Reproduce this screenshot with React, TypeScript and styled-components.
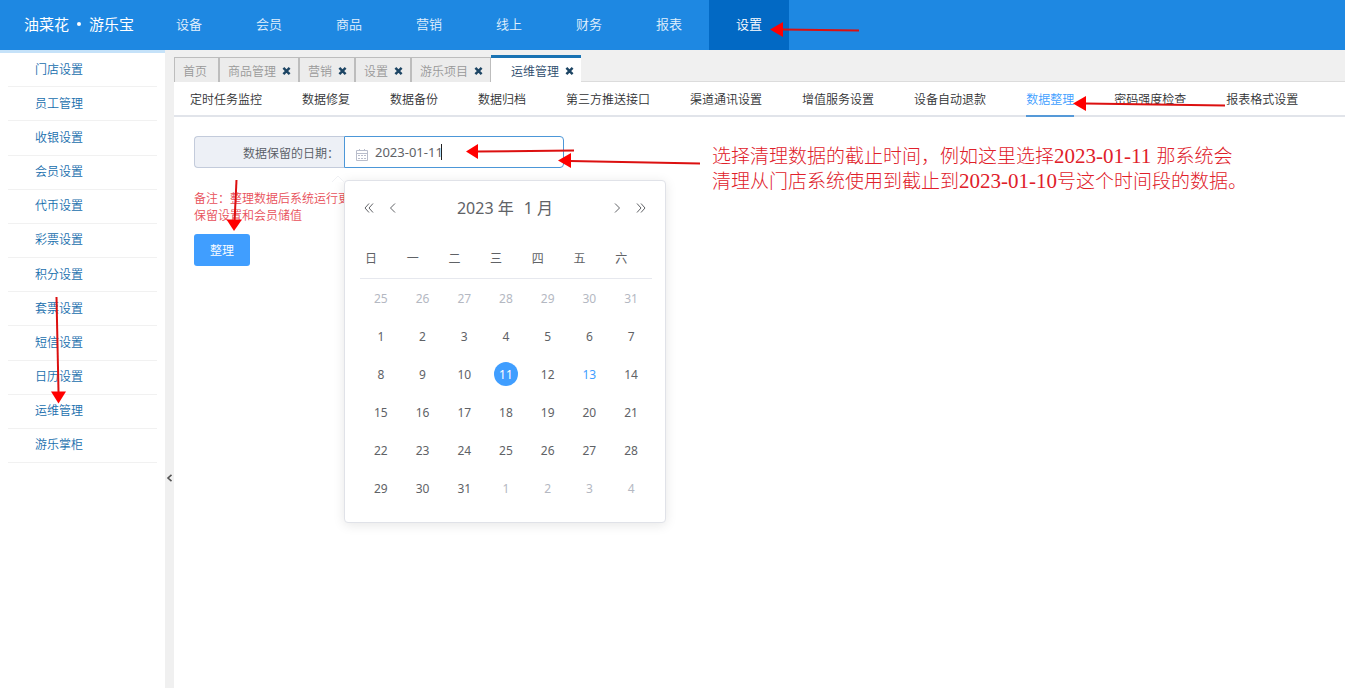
import React, { useState } from "react";
import styled, { createGlobalStyle } from "styled-components";

const CJK = '"Noto Sans CJK SC", sans-serif';
const UI = `"Noto Sans", ${CJK}`;

const GlobalStyle = createGlobalStyle`
  *, *::before, *::after { box-sizing: border-box; }
  body { margin: 0; background: #fff; font: 350 12px/16px ${CJK}; color: #303133; }
  button, input { font-family: inherit; font-weight: inherit; }
  button { margin: 0; padding: 0; border: 0; background: none; color: inherit; cursor: pointer; }
  a { color: inherit; text-decoration: none; }
`;

const Page = styled.div`
  position: relative;
  min-height: 100vh;
  display: flex;
  flex-direction: column;
  overflow: hidden;
`;

const Header = styled.header`
  display: flex;
  height: 50px;
  background: #1e88e2;
  color: #e3f1fd;
`;

const Logo = styled.div`
  display: flex;
  align-items: center;
  width: 149px;
  padding: 0 0 2px 24px;
  font-size: 15px;
  font-weight: 400;
  color: #fff;
`;

const LogoDot = styled.span`
  width: 4px;
  height: 4px;
  margin: 0 8px;
  border-radius: 50%;
  background: #fff;
`;

const MainNav = styled.nav`
  display: flex;
`;

const NavLink = styled.a<{ $active: boolean }>`
  width: 80px;
  line-height: 48px;
  font-size: 13px;
  text-align: center;
  background: ${(p) => (p.$active ? "#0269c4" : "transparent")};
  color: ${(p) => (p.$active ? "#fff" : "inherit")};
`;

const Body = styled.div`
  flex: 1;
  display: flex;
`;

const Sidebar = styled.aside`
  width: 165px;
  border-top: 3px solid #c5e2f9;
`;

const SideList = styled.ul`
  display: flex;
  flex-direction: column;
  height: 410px;
  margin: 0;
  padding: 0 8px;
  list-style: none;
`;

const SideItem = styled.li`
  flex: 1;
  display: flex;
  align-items: center;
  padding: 0 0 2px 27px;
  border-bottom: 1px solid #f1f1f1;
  color: #176ead;
`;

const Splitter = styled.div`
  width: 9px;
  padding-top: 420px;
  background: #f0f0f0;
`;

const Collapse = styled.button`
  display: block;
  width: 9px;
  height: 16px;
  color: #555;

  svg { display: block; margin: 0 auto; }
`;

const Main = styled.main`
  flex: 1;
  min-width: 0;
`;

const TabBar = styled.div`
  display: flex;
  align-items: flex-end;
  height: 32px;
  background: #f0f0f0;
  box-shadow: inset 0 -1px #dcdcdc;
`;

const Tab = styled.div<{ $active?: boolean }>`
  display: flex;
  align-items: center;
  gap: 6px;
  min-width: 45px;
  height: ${(p) => (p.$active ? "27px" : "25px")};
  padding: ${(p) => (p.$active ? "2px 7px 0 20px" : "1px 7px 0 8px")};
  border: 1px solid #bdbdbd;
  border-bottom: 0;
  background: #ececec;
  color: #999;

  ${(p) =>
    p.$active &&
    `
    border: 0;
    border-top: 3px solid #1a73b3;
    background: #fff;
    color: #2b4a6b;
  `}
`;

const TabClose = styled.button`
  width: 9px;
  height: 16px;
  color: #1d4564;

  svg { display: block; margin: 3px 0; }
`;

const SubTabs = styled.nav`
  display: flex;
  gap: 40px;
  height: 35px;
  padding: 0 16px;
  white-space: nowrap;
  box-shadow: inset 0 -2px #e1e4ea;
`;

const SubTab = styled.a<{ $active: boolean }>`
  line-height: 33px;
  color: ${(p) => (p.$active ? "#409eff" : "#303133")};
  box-shadow: ${(p) => (p.$active ? "inset 0 -2px #5599d8" : "none")};
`;

const Form = styled.form`
  padding: 19px 20px;
`;

const Field = styled.div`
  position: relative;
  display: flex;
  width: 370px;
  height: 32px;
`;

const FieldLabel = styled.label`
  width: 150px;
  padding-right: 5px;
  border: 1px solid #c3cbdb;
  border-right: 0;
  border-radius: 4px 0 0 4px;
  background: #edf0f6;
  color: #555a63;
  line-height: 31px;
  text-align: right;
`;

const DateBox = styled.div`
  flex: 1;
  display: flex;
  align-items: center;
  gap: 6px;
  padding-left: 10px;
  border: 1px solid #4c97d8;
  border-radius: 0 4px 4px 0;
  background: #fff;
  color: #b9bdcb;

  svg { margin-top: 6px; }
`;

const DateInput = styled.input`
  flex: 1;
  min-width: 0;
  padding: 0;
  border: 0;
  outline: 0;
  background: transparent;
  color: #606266;
  font: 400 13px/20px ${UI};
`;

const Caret = styled.span`
  position: absolute;
  left: 247px;
  top: 8px;
  width: 1px;
  height: 16px;
  background: #222;
`;

const Remark = styled.p`
  margin: 21px 0 11px;
  line-height: 17px;
  color: #e8505a;
`;

const Submit = styled.button`
  width: 56px;
  height: 32px;
  padding-bottom: 2px;
  border-radius: 3px;
  background: #409eff;
  color: #fff;
  font-size: 12px;
`;

const Picker = styled.div`
  position: absolute;
  left: 150px;
  top: 44px;
  width: 322px;
  border: 1px solid #e0e2e8;
  border-radius: 4px;
  background: #fff;
  box-shadow: 0 2px 12px rgba(0, 0, 0, 0.1);
  color: #606266;
  font-family: ${UI};
  font-weight: 400;
`;

const PickerArrow = styled.svg`
  position: absolute;
  left: -14px;
  top: -6px;
`;

const PickerHead = styled.div`
  display: flex;
  align-items: center;
  margin: 12px;
  height: 30px;
`;

const PickerTitle = styled.div`
  flex: 1;
  display: flex;
  justify-content: center;
`;

const TitleButton = styled.button`
  padding: 0 5px;
  font-size: 16px;
  line-height: 28px;
`;

const Step = styled.button`
  width: 24px;
  height: 24px;

  svg { display: block; margin: 0 auto; }
`;

const Calendar = styled.table`
  width: 292px;
  margin: 15px 14px 15px 15px;
  table-layout: fixed;
  border-collapse: separate;
  border-spacing: 0;
`;

const Weekday = styled.th`
  height: 41px;
  padding: 2px 0 0 5px;
  border-bottom: 1px solid #e6e8ee;
  font-size: 12px;
  font-weight: inherit;
  text-align: left;
`;

const DayCell = styled.td`
  height: 38px;
  padding: 0;
  text-align: center;
`;

type DayKind = "normal" | "muted" | "today" | "selected";

const dayColor: Record<DayKind, string> = {
  normal: "#606266",
  muted: "#b4b8c2",
  today: "#409eff",
  selected: "#fff",
};

const Day = styled.button<{ $kind: DayKind }>`
  display: block;
  width: 24px;
  height: 24px;
  margin: 0 auto;
  padding-top: 2px;
  border-radius: 50%;
  font-size: 12px;
  line-height: 22px;
  color: ${(p) => dayColor[p.$kind]};
  background: ${(p) => (p.$kind === "selected" ? "#409eff" : "none")};
`;

const Note = styled.p`
  position: absolute;
  left: 712px;
  top: 144px;
  margin: 0;
  color: #e0202a;
  font: 300 19px/24px "Liberation Serif", "Noto Sans CJK SC", serif;
  white-space: nowrap;
`;

const NoteDate = styled.span`
  font-size: 21px;
`;

const Arrows = styled.svg`
  position: absolute;
  left: 0;
  top: 0;
  pointer-events: none;
`;

const CloseIcon = () => (
  <svg width="9" height="10" viewBox="0 0 9 10">
    <path d="M1.4 1.9 7.6 8.1M7.6 1.9 1.4 8.1" stroke="currentColor" strokeWidth="2.5" />
  </svg>
);

const CalendarIcon = () => (
  <svg width="14" height="14" viewBox="0 0 14 14" fill="none" stroke="currentColor">
    <path d="M1.5 2.5h11v10h-11zM1.5 5.5h11M4.5 1v2M9.5 1v2" />
    <path d="M3 7.5h8M3 10.5h8" strokeDasharray="2 1" />
  </svg>
);

const Chevron = ({ double = false, right = false }: { double?: boolean; right?: boolean }) => (
  <svg width="12" height="12" viewBox="0 0 12 12" fill="none" stroke="currentColor">
    <g transform={right ? "matrix(-1 0 0 1 12 0)" : undefined}>
      {double ? <path d="M6 1.5 2 6l4 4.5M10 1.5 6 6l4 4.5" /> : <path d="M8 1.5 3.5 6 8 10.5" />}
    </g>
  </svg>
);

const navItems = ["设备", "会员", "商品", "营销", "线上", "财务", "报表", "设置"];
const sideItems = [
  "门店设置", "员工管理", "收银设置", "会员设置", "代币设置", "彩票设置",
  "积分设置", "套票设置", "短信设置", "日历设置", "运维管理", "游乐掌柜",
];
const tabs = ["首页", "商品管理", "营销", "设置", "游乐项目", "运维管理"];
const subTabs = [
  "定时任务监控", "数据修复", "数据备份", "数据归档", "第三方推送接口", "渠道通讯设置",
  "增值服务设置", "设备自动退款", "数据整理", "密码强度检查", "报表格式设置",
];
const weekdays = ["日", "一", "二", "三", "四", "五", "六"];
const weeks = [
  [25, 26, 27, 28, 29, 30, 31],
  [1, 2, 3, 4, 5, 6, 7],
  [8, 9, 10, 11, 12, 13, 14],
  [15, 16, 17, 18, 19, 20, 21],
  [22, 23, 24, 25, 26, 27, 28],
  [29, 30, 31, 1, 2, 3, 4],
];

const arrows = [
  { line: "M859 30.5 782 29.5", head: "770,29.5 783,22 783,37" },
  { line: "M1225 105.5 1085 103.5", head: "1073,103.5 1086,96 1086,111" },
  { line: "M574 150.5 477 151.5", head: "466,151.5 478,144 478,159" },
  { line: "M700 163.5 570 161", head: "558,160.5 571,153 571,168" },
  { line: "M236.5 180 234.5 222", head: "234,231 226.5,219.5 242,219.5" },
  { line: "M56.5 297 58.5 392", head: "58.5,403.5 51,391.5 66,391.5" },
];

export default function App() {
  const [date, setDate] = useState("2023-01-11");
  const selected = Number(date.slice(8));

  const kindOf = (day: number, week: number): DayKind => {
    if ((week === 0 && day > 7) || (week === 5 && day < 7)) return "muted";
    if (day === selected) return "selected";
    return day === 13 ? "today" : "normal";
  };

  return (
    <Page>
      <GlobalStyle />
      <Header>
        <Logo>
          油菜花
          <LogoDot />
          游乐宝
        </Logo>
        <MainNav>
          {navItems.map((item) => (
            <NavLink key={item} href="#" $active={item === "设置"}>{item}</NavLink>
          ))}
        </MainNav>
      </Header>
      <Body>
        <Sidebar>
          <SideList>
            {sideItems.map((item) => (
              <SideItem key={item}><a href="#">{item}</a></SideItem>
            ))}
          </SideList>
        </Sidebar>
        <Splitter>
          <Collapse type="button" aria-label="收起">
            <svg width="7" height="8" viewBox="0 0 7 8" fill="none" stroke="currentColor" strokeWidth="1.6">
              <path d="M5.5 .8 2 4l3.5 3.2" />
            </svg>
          </Collapse>
        </Splitter>
        <Main>
          <TabBar>
            {tabs.map((name, i) => (
              <Tab key={name} $active={i === tabs.length - 1}>
                <a href="#">{name}</a>
                {i > 0 && (
                  <TabClose type="button" aria-label={`关闭${name}`}><CloseIcon /></TabClose>
                )}
              </Tab>
            ))}
          </TabBar>
          <SubTabs>
            {subTabs.map((name) => (
              <SubTab key={name} href="#" $active={name === "数据整理"}>{name}</SubTab>
            ))}
          </SubTabs>
          <Form onSubmit={(e) => e.preventDefault()}>
            <Field>
              <FieldLabel htmlFor="keep-date">数据保留的日期：</FieldLabel>
              <DateBox>
                <CalendarIcon />
                <DateInput id="keep-date" value={date} onChange={(e) => setDate(e.target.value)} />
              </DateBox>
              <Caret />
              <Picker>
                <PickerArrow width="14" height="7" viewBox="0 0 14 7" aria-hidden="true">
                  <path d="M1 7 7 1l6 6" fill="#fff" stroke="#f0f1f4" />
                </PickerArrow>
                <PickerHead>
                  <Step type="button" aria-label="前一年"><Chevron double /></Step>
                  <Step type="button" aria-label="上个月"><Chevron /></Step>
                  <PickerTitle>
                    <TitleButton type="button">2023 年</TitleButton>
                    <TitleButton type="button">1 月</TitleButton>
                  </PickerTitle>
                  <Step type="button" aria-label="下个月"><Chevron right /></Step>
                  <Step type="button" aria-label="后一年"><Chevron double right /></Step>
                </PickerHead>
                <Calendar>
                  <thead>
                    <tr>{weekdays.map((d) => <Weekday key={d} scope="col">{d}</Weekday>)}</tr>
                  </thead>
                  <tbody>
                    {weeks.map((week, w) => (
                      <tr key={w}>
                        {week.map((day) => (
                          <DayCell key={day}>
                            <Day
                              type="button"
                              $kind={kindOf(day, w)}
                              onClick={() => setDate(`2023-01-${String(day).padStart(2, "0")}`)}
                            >
                              {day}
                            </Day>
                          </DayCell>
                        ))}
                      </tr>
                    ))}
                  </tbody>
                </Calendar>
              </Picker>
            </Field>
            <Remark>
              备注：整理数据后系统运行更
              <br />
              保留设置和会员储值
            </Remark>
            <Submit type="submit">整理</Submit>
          </Form>
        </Main>
      </Body>
      <Note>
        选择清理数据的截止时间，例如这里选择<NoteDate>2023-01-11 </NoteDate>那系统会
        <br />
        清理从门店系统使用到截止到<NoteDate>2023-01-10</NoteDate>号这个时间段的数据。
      </Note>
      <Arrows width="1300" height="420" viewBox="0 0 1300 420" aria-hidden="true">
        {arrows.map((a) => (
          <g key={a.head}>
            <path d={a.line} stroke="#dc1010" strokeWidth="2" />
            <polygon points={a.head} fill="#f00" />
          </g>
        ))}
      </Arrows>
    </Page>
  );
}
